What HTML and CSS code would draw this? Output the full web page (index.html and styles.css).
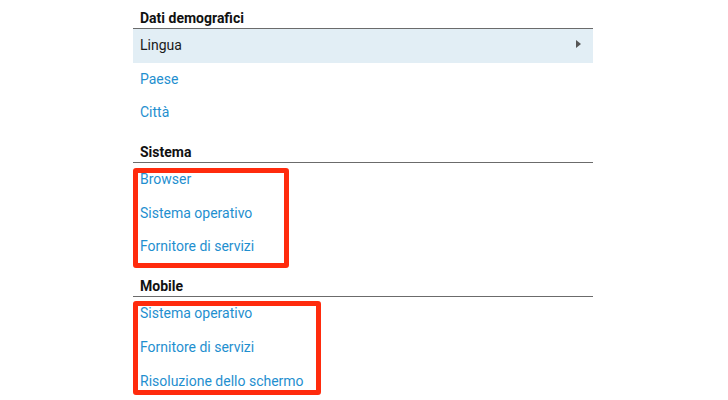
FILE: index.html
```html
<!DOCTYPE html>
<html lang="it">
<head>
  <meta charset="UTF-8" />
  <title>Dimensioni</title>
  <meta name="viewport" content="width=device-width, initial-scale=1.0" />
  <link rel="stylesheet" href="styles.css">
</head>
<body>
  <div class="menu">
    <div class="section-title">Dati demografici</div>
    <div class="item active">Lingua <span class="arrow"></span></div>
    <div class="item">Paese</div>
    <div class="item">Città</div>

    <div class="section-title">Sistema</div>
    <div class="group">
      <div class="item">Browser</div>
      <div class="item">Sistema operativo</div>
      <div class="item">Fornitore di servizi</div>
      <span class="mark mark-system"></span>
    </div>

    <div class="section-title">Mobile</div>
    <div class="group">
      <div class="item">Sistema operativo</div>
      <div class="item">Fornitore di servizi</div>
      <div class="item">Risoluzione dello schermo</div>
      <span class="mark mark-mobile"></span>
    </div>
  </div>
</body>
</html>
```

FILE: styles.css
```css
body {
  margin: 0;
  background-color: #ffffff;
  font-family: Roboto, "Liberation Sans", sans-serif;
  font-size: 14px;
  overflow: hidden;
}

.menu {
  width: 460px;
  margin-left: 133px;
  margin-top: -4px;
}

.section-title {
  padding: 14px 0 2px 7px;
  line-height: 16px;
  font-weight: bold;
  color: #111111;
  border-bottom: 1px solid #6b6b6b;
}

.item {
  position: relative;
  height: 33.7px;
  line-height: 33.7px;
  padding-left: 7px;
  color: #1f8fcf;
}

.item.active {
  background-color: #e2eef5;
  color: #1a1a1a;
}

.arrow {
  position: absolute;
  right: 12px;
  top: 11px;
  width: 0;
  height: 0;
  border-top: 4px solid transparent;
  border-bottom: 4px solid transparent;
  border-left: 5px solid #555555;
}

.group {
  position: relative;
}

.mark {
  position: absolute;
  left: 0;
  border: 5px solid #ff2b0d;
  border-radius: 3px;
  box-sizing: border-box;
}

.mark-system {
  top: 5px;
  width: 156px;
  height: 100px;
}

.mark-mobile {
  top: 4px;
  width: 188px;
  height: 94px;
}
```
